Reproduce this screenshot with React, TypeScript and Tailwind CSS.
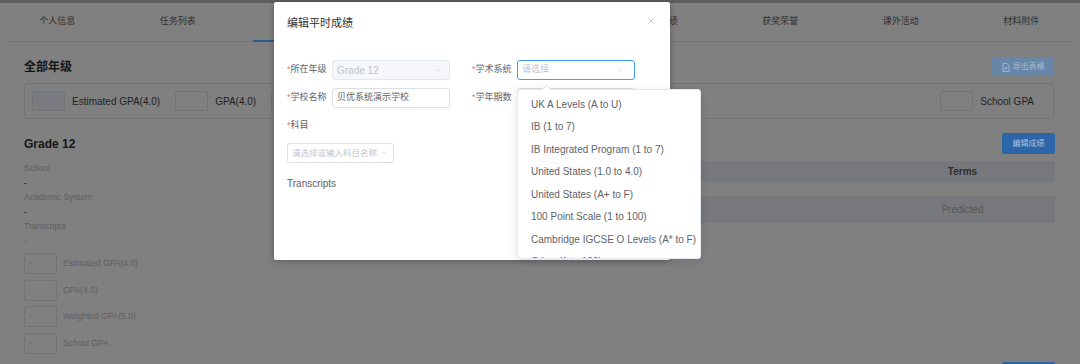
import { ChevronDown, ChevronUp, X } from "lucide-react";

const tabs = ["个人信息", "任务列表", "平时成绩", "标化考试", "语言考试", "竞赛成绩", "获奖荣誉", "课外活动", "材料附件"];

const summary = ["Estimated GPA(4.0)", "GPA(4.0)", "Weighted GPA(5.0)"];

const gradeBoxes = ["Estimated GPA(4.0)", "GPA(4.0)", "Weighted GPA(5.0)", "School GPA"];

const systems = [
  "UK A Levels (A to U)",
  "IB (1 to 7)",
  "IB Integrated Program (1 to 7)",
  "United States (1.0 to 4.0)",
  "United States (A+ to F)",
  "100 Point Scale (1 to 100)",
  "Cambridge IGCSE O Levels (A* to F)",
  "Other (1 to 100)",
];

function Label({ text }: { text: string }) {
  return (
    <span className="w-[45px] shrink-0 text-[9px] text-[#606266]">
      <span className="text-[#f56c6c]">*</span>
      {text}
    </span>
  );
}

export default function App() {
  return (
    <div
      className="relative h-[364px] w-[1080px] overflow-hidden bg-[#808080]"
      style={{ fontFamily: '"Liberation Sans", "Noto Sans CJK SC", sans-serif' }}
    >
      {/* page under the mask, already dimmed */}
      <div className="h-[3px] bg-[#5e5e5e]" />
      <nav className="mx-[10px] h-[39px] border-b border-[#747474]">
        <div className="-ml-[13px] flex h-full">
          {tabs.map((t, i) => (
            <div key={t} className="relative flex w-[120.5px] shrink-0 items-center justify-center text-[9px] text-[#2f2f2f]">
              {t}
              {i === 2 && <span className="absolute bottom-[-1px] left-[15px] right-[15px] h-[2px] bg-[#2a5d92]" />}
            </div>
          ))}
        </div>
      </nav>

      <div className="pl-[24px] pr-[26px]">
        <div className="mt-[16px] flex h-[18px] items-center justify-between">
          <h2 className="text-[12px] font-bold text-[#151515]">全部年级</h2>
          <button className="flex h-[18px] w-[62px] items-center justify-center gap-[3px] rounded-[2px] bg-[#6887a8] text-[8px] text-[#a9bcd0]">
            <svg width="8" height="9" viewBox="0 0 8 9" fill="none" stroke="#a9bcd0" strokeWidth="0.9">
              <path d="M1 0.5h4l2 2v6H1z" />
              <path d="M2.8 4l2.4 2.8M5.2 4L2.8 6.8" />
            </svg>
            导出表格
          </button>
        </div>

        <div className="mt-[7px] flex h-[36px] items-center rounded-[3px] border border-[#747474] px-[7px]">
          {summary.map((s, i) => (
            <div key={s} className="mr-[15px] flex items-center gap-[7px]">
              <div className={`flex h-[20px] w-[33px] items-center rounded-[2px] border border-[#747474] pl-[4px] text-[8px] text-[#6a6a6a] ${i === 0 ? "bg-[#787b7f]" : ""}`}>-</div>
              <span className="text-[10px] text-[#1f1f1f]">{s}</span>
            </div>
          ))}
          <div className="ml-auto mr-[12px] flex items-center gap-[7px]">
            <div className="flex h-[20px] w-[33px] items-center rounded-[2px] border border-[#747474] pl-[4px] text-[8px] text-[#6a6a6a]">-</div>
            <span className="text-[10px] text-[#1f1f1f]">School GPA</span>
          </div>
        </div>

        <div className="mt-[14px] flex h-[21px] items-center justify-between">
          <h2 className="text-[12px] font-bold text-[#151515]">Grade 12</h2>
          <button className="-mr-[1px] h-[21px] w-[53px] rounded-[2px] bg-[#2c66a8] text-[8px] text-[#a9c3df]">编辑成绩</button>
        </div>

        <div className="mt-[7px] flex">
          <div className="w-[250px] text-[8.5px] leading-[14.6px]">
            <div className="text-[#5f5f5f]">School</div>
            <div className="text-[#151515]">-</div>
            <div className="text-[#5f5f5f]">Academic System</div>
            <div className="text-[#151515]">-</div>
            <div className="text-[#5f5f5f]">Transcripts</div>
            <div className="text-[#5f5f5f]">-</div>
            <div className="mt-[4.5px] flex flex-col gap-[5.5px]">
              {gradeBoxes.map((g) => (
                <div key={g} className="flex items-center gap-[6px]">
                  <div className="flex h-[21px] w-[33px] items-center rounded-[2px] border border-[#747474] pl-[4px] text-[#6a6a6a]">-</div>
                  <span className="text-[#5f5f5f]">{g}</span>
                </div>
              ))}
            </div>
          </div>
          <div className="-mr-[1px] flex-1">
            <div className="flex h-[21px] justify-end bg-[#77787c]">
              <div className="flex w-[185px] items-center justify-center text-[10px] font-bold text-[#2e2e2e]">Terms</div>
            </div>
            <div className="mt-[14px] flex h-[27px] justify-end bg-[#77787c]">
              <div className="flex w-[185px] items-center justify-center text-[10px] text-[#575757]">Predicted</div>
            </div>
          </div>
        </div>

        <div className="mt-[8.5px] flex justify-end">
          <div className="-mr-[1px] h-[21px] w-[53px] rounded-[2px] bg-[#2c66a8]" />
        </div>
      </div>

      {/* modal */}
      <div className="absolute left-[274px] top-[2px] h-[258px] w-[396px] rounded-[2px] bg-white shadow-[0_1px_6px_rgba(0,0,0,0.3)]">
        <div className="flex h-[42px] items-center justify-between pl-[13px] pr-[14px]">
          <span className="text-[11px] text-[#303133]">编辑平时成绩</span>
          <X size={10} strokeWidth={1.4} className="-mt-[5px] text-[#a0a3a8]" />
        </div>

        <div className="mt-[16px] grid grid-cols-[163px_163px] gap-x-[22px] gap-y-[8px] pl-[13px]">
          <div className="flex items-center">
            <Label text="所在年级" />
            <div className="flex h-[20px] flex-1 items-center justify-between rounded-[3px] border border-[#e4e7ed] bg-[#f5f7fa] pl-[4px] pr-[7px] text-[10px] text-[#c0c4cc]">
              Grade 12
              <ChevronDown size={9} strokeWidth={1.4} />
            </div>
          </div>
          <div className="flex items-center">
            <Label text="学术系统" />
            <div className="flex h-[20px] flex-1 items-center justify-between rounded-[3px] border border-[#409eff] pl-[4px] pr-[9px] text-[9px] text-[#c0c4cc]">
              请选择
              <ChevronUp size={9} strokeWidth={1.4} />
            </div>
          </div>
          <div className="flex items-center">
            <Label text="学校名称" />
            <div className="flex h-[20px] flex-1 items-center rounded-[3px] border border-[#dcdfe6] pl-[4px] text-[9px] text-[#606266]">贝优系统演示学校</div>
          </div>
          <div className="flex items-center">
            <Label text="学年期数" />
            <div className="h-[20px] flex-1 rounded-[3px] border border-[#dcdfe6]" />
          </div>
        </div>

        <div className="mt-[10px] pl-[13px] text-[9px] leading-[14px] text-[#606266]">
          <span className="text-[#f56c6c]">*</span>科目
        </div>
        <div className="ml-[13px] mt-[11px] flex h-[20px] w-[107px] items-center justify-between rounded-[3px] border border-[#dcdfe6] pl-[4px] pr-[5px] text-[8.5px] text-[#c0c4cc]">
          请选择或输入科目名称
          <ChevronDown size={8} strokeWidth={1.4} />
        </div>
        <div className="mt-[13px] pl-[13px] text-[10px] text-[#606266]">Transcripts</div>
      </div>

      {/* select dropdown */}
      <div className="absolute left-[517px] top-[89px] h-[170px] w-[184px] rounded-[3px] border border-[#e4e7ed] bg-white shadow-[0_2px_10px_rgba(0,0,0,0.12)]">
        <div className="absolute -top-[4px] left-[25px] h-[7px] w-[7px] rotate-45 border-l border-t border-[#e4e7ed] bg-white" />
        <div className="h-full overflow-hidden pt-[3px]">
          {systems.map((s) => (
            <div key={s} className="flex h-[22.5px] items-center pl-[13px] text-[10px] text-[#606266]">
              {s}
            </div>
          ))}
        </div>
      </div>
    </div>
  );
}
